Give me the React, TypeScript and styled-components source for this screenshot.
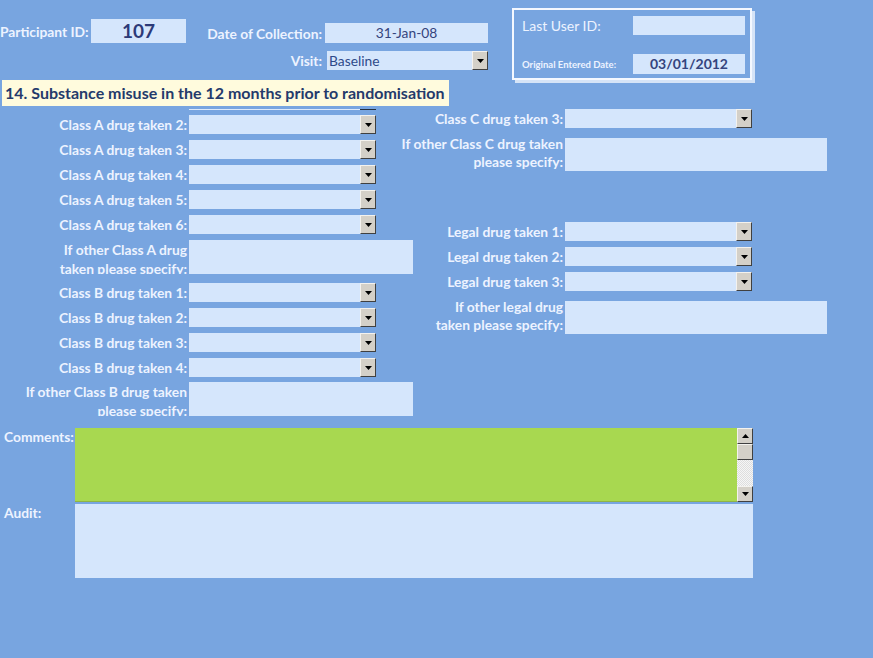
import React from "react";
import styled, { createGlobalStyle } from "styled-components";

const GlobalStyle = createGlobalStyle`
  html, body {
    margin: 0;
    padding: 0;
    background: #78a5e0;
  }
`;

const Form = styled.div`
  width: 873px;
  height: 658px;
  background: #78a5e0;
  overflow: hidden;
  font-family: "Lato", "Open Sans", sans-serif;
  color: #edf3ff;
`;

const TopBar = styled.div`
  display: flex;
  align-items: flex-start;
  height: 80px;
`;

const Inline = styled.div`
  display: flex;
  align-items: center;
  margin-top: 19px;
`;

const TopLabel = styled.div<{ $size?: number; $weight?: number; $w?: number }>`
  box-sizing: border-box;
  width: ${(p) => (p.$w ? `${p.$w}px` : "auto")};
  font-size: ${(p) => p.$size ?? 13.8}px;
  font-weight: ${(p) => p.$weight ?? 700};
  white-space: nowrap;
`;

const IdBox = styled.div`
  width: 95px;
  height: 24px;
  margin-left: 3px;
  background: #d5e6fc;
  color: #2c3a78;
  font-size: 19px;
  font-weight: 700;
  text-align: center;
  line-height: 24px;
`;

const DateGrid = styled.div`
  display: grid;
  grid-template-columns: 119px 163px;
  grid-template-rows: 20px 19px;
  row-gap: 8px;
  margin-left: 20px;
  margin-top: 23px;
  align-items: center;
`;

const RightText = styled(TopLabel)`
  text-align: right;
  padding-right: 3px;
`;

const ValueBox = styled.div<{ $bold?: boolean; $h?: number }>`
  height: ${(p) => p.$h ?? 20}px;
  background: #d5e6fc;
  color: #34447e;
  font-size: ${(p) => (p.$bold ? 14 : 13.8)}px;
  font-weight: ${(p) => (p.$bold ? 700 : 400)};
  text-align: center;
  line-height: ${(p) => p.$h ?? 20}px;
`;

const AuditBox = styled.div`
  box-sizing: border-box;
  width: 240px;
  height: 72px;
  margin-left: 24px;
  margin-top: 8px;
  border: 2px solid #f4f8ff;
  box-shadow: 3px 3px 0 #d6e4f7;
  display: grid;
  grid-template-columns: 1fr 112px;
  grid-template-rows: 19px 20px;
  row-gap: 19px;
  padding: 6px 5px 0 8px;
  align-items: center;
`;

const Banner = styled.div`
  box-sizing: border-box;
  width: 447px;
  height: 26px;
  margin-left: 2px;
  padding-left: 3px;
  background: #fffbdd;
  color: #243a6b;
  font-size: 16px;
  font-weight: 700;
  line-height: 26px;
  white-space: nowrap;
`;

const Columns = styled.div`
  display: grid;
  grid-template-columns: 380px 1fr;
  align-items: start;
`;

const Column = styled.div`
  display: flex;
  flex-direction: column;
`;

const Row = styled.div<{ $top: number }>`
  display: flex;
  align-items: flex-start;
  margin-top: ${(p) => p.$top}px;
`;

const FieldLabel = styled.div<{ $w: number; $h: number; $shift?: number; $clip?: boolean }>`
  box-sizing: border-box;
  width: ${(p) => p.$w}px;
  height: ${(p) => p.$h}px;
  padding-right: 2px;
  margin-top: ${(p) => -(p.$shift ?? 0)}px;
  text-align: right;
  font-size: 13.8px;
  font-weight: 700;
  line-height: ${(p) => (p.$h > 20 ? (p.$clip ? "19px" : "18px") : `${p.$h}px`)};
  white-space: nowrap;
  overflow: ${(p) => (p.$clip ? "hidden" : "visible")};
  flex-shrink: 0;
`;

const ComboBox = styled.div<{ $w: number; $indent?: number }>`
  display: flex;
  width: ${(p) => p.$w}px;
  height: 19px;
  margin-left: ${(p) => p.$indent ?? 0}px;
  background: #d5e6fc;
  color: #2e4a8a;
  font-size: 13.8px;
  line-height: 19px;
`;

const ComboText = styled.div`
  flex: 1;
  padding-left: 2px;
`;

const DropButton = styled.div`
  box-sizing: border-box;
  width: 16px;
  height: 19px;
  background: #d4d0c8;
  border-top: 1px solid #f4f2ee;
  border-left: 1px solid #f4f2ee;
  border-right: 1px solid #404040;
  border-bottom: 1px solid #404040;
  display: flex;
  align-items: center;
  justify-content: center;
`;

const MemoBox = styled.div<{ $w: number; $h: number }>`
  width: ${(p) => p.$w}px;
  height: ${(p) => p.$h}px;
  background: #d5e6fc;
  flex-shrink: 0;
`;

const Stub = styled.div`
  width: 187px;
  height: 1px;
  margin-left: 189px;
  margin-top: 3px;
  background: linear-gradient(to right, #dce9fb 0 171px, #26303f 171px 187px);
`;

const Notes = styled.div`
  display: flex;
  flex-direction: column;
  gap: 2px;
  margin-top: 12px;
`;

const NoteRow = styled.div`
  display: flex;
  align-items: flex-start;
`;

const NoteLabel = styled.div`
  box-sizing: border-box;
  width: 75px;
  padding-left: 4px;
  font-size: 13.8px;
  font-weight: 700;
  line-height: 18px;
`;

const NoteBox = styled.div<{ $green?: boolean }>`
  width: 678px;
  height: 74px;
  background: ${(p) => (p.$green ? "#a8d850" : "#d5e6fc")};
  box-shadow: ${(p) => (p.$green ? "inset 0 -1px 0 #8fb446" : "none")};
  display: flex;
  justify-content: flex-end;
`;

const ScrollBar = styled.div`
  width: 16px;
  height: 74px;
  display: flex;
  flex-direction: column;
  background-color: #f2f2f2;
  background-image: repeating-conic-gradient(#dedede 0 25%, #f6f6f6 0 50%);
  background-size: 2px 2px;
`;

const ScrollButton = styled(DropButton)<{ $h?: number }>`
  width: 16px;
  height: ${(p) => p.$h ?? 16}px;
`;

const Filler = styled.div`
  flex: 1;
`;

function Arrow({ up }: { up?: boolean }) {
  return (
    <svg width="7" height="4" viewBox="0 0 7 4">
      <polygon points={up ? "0,4 7,4 3.5,0" : "0,0 7,0 3.5,4"} fill="#000" />
    </svg>
  );
}

function Combo({ w = 187, value, indent }: { w?: number; value?: string; indent?: number }) {
  return (
    <ComboBox $w={w} $indent={indent}>
      <ComboText>{value}</ComboText>
      <DropButton>
        <Arrow />
      </DropButton>
    </ComboBox>
  );
}

type Field =
  | { kind: "combo"; label: string; top: number }
  | { kind: "memo"; lines: [string, string]; top: number; h: number; shift?: number; clip?: boolean };

const leftFields: Field[] = [
  { kind: "combo", label: "Class A drug taken 2:", top: 5 },
  { kind: "combo", label: "Class A drug taken 3:", top: 6 },
  { kind: "combo", label: "Class A drug taken 4:", top: 6 },
  { kind: "combo", label: "Class A drug taken 5:", top: 6 },
  { kind: "combo", label: "Class A drug taken 6:", top: 6 },
  { kind: "memo", lines: ["If other Class A drug", "taken please specify:"], top: 6, h: 34, clip: true },
  { kind: "combo", label: "Class B drug taken 1:", top: 9 },
  { kind: "combo", label: "Class B drug taken 2:", top: 6 },
  { kind: "combo", label: "Class B drug taken 3:", top: 6 },
  { kind: "combo", label: "Class B drug taken 4:", top: 6 },
  { kind: "memo", lines: ["If other Class B drug taken", "please specify:"], top: 5, h: 34, clip: true },
];

const rightFields: Field[] = [
  { kind: "combo", label: "Class C drug taken 3:", top: 3 },
  { kind: "memo", lines: ["If other Class C drug taken", "please specify:"], top: 10, h: 33, shift: 3 },
  { kind: "combo", label: "Legal drug taken 1:", top: 51 },
  { kind: "combo", label: "Legal drug taken 2:", top: 6 },
  { kind: "combo", label: "Legal drug taken 3:", top: 6 },
  { kind: "memo", lines: ["If other legal drug", "taken please specify:"], top: 10, h: 33, shift: 3 },
];

function FieldColumn({ fields, labelW, memoW, stub }: { fields: Field[]; labelW: number; memoW: number; stub?: boolean }) {
  return (
    <Column>
      {stub && <Stub />}
      {fields.map((f, i) =>
        f.kind === "combo" ? (
          <Row key={i} $top={f.top}>
            <FieldLabel $w={labelW} $h={19}>
              {f.label}
            </FieldLabel>
            <Combo />
          </Row>
        ) : (
          <Row key={i} $top={f.top}>
            <FieldLabel $w={labelW} $h={f.h + (f.shift ?? 0)} $shift={f.shift} $clip={f.clip}>
              {f.lines[0]}
              <br />
              {f.lines[1]}
            </FieldLabel>
            <MemoBox $w={memoW} $h={f.h} />
          </Row>
        )
      )}
    </Column>
  );
}

export default function App() {
  return (
    <>
      <GlobalStyle />
      <Form>
        <TopBar>
          <Inline>
            <TopLabel $w={88}>Participant ID:</TopLabel>
            <IdBox>107</IdBox>
          </Inline>
          <DateGrid>
            <RightText>Date of Collection:</RightText>
            <ValueBox>31-Jan-08</ValueBox>
            <RightText>Visit:</RightText>
            <Combo w={161} value="Baseline" indent={2} />
          </DateGrid>
          <AuditBox>
            <TopLabel $weight={400} $size={14}>Last User ID:</TopLabel>
            <ValueBox $h={19} />
            <TopLabel $size={9.5}>Original Entered Date:</TopLabel>
            <ValueBox $bold>03/01/2012</ValueBox>
          </AuditBox>
        </TopBar>
        <Banner>14. Substance misuse in the 12 months prior to randomisation</Banner>
        <Columns>
          <FieldColumn fields={leftFields} labelW={189} memoW={224} stub />
          <FieldColumn fields={rightFields} labelW={185} memoW={262} />
        </Columns>
        <Notes>
          <NoteRow>
            <NoteLabel>Comments:</NoteLabel>
            <NoteBox $green>
              <ScrollBar>
                <ScrollButton>
                  <Arrow up />
                </ScrollButton>
                <ScrollButton />
                <Filler />
                <ScrollButton>
                  <Arrow />
                </ScrollButton>
              </ScrollBar>
            </NoteBox>
          </NoteRow>
          <NoteRow>
            <NoteLabel>Audit:</NoteLabel>
            <NoteBox />
          </NoteRow>
        </Notes>
      </Form>
    </>
  );
}
